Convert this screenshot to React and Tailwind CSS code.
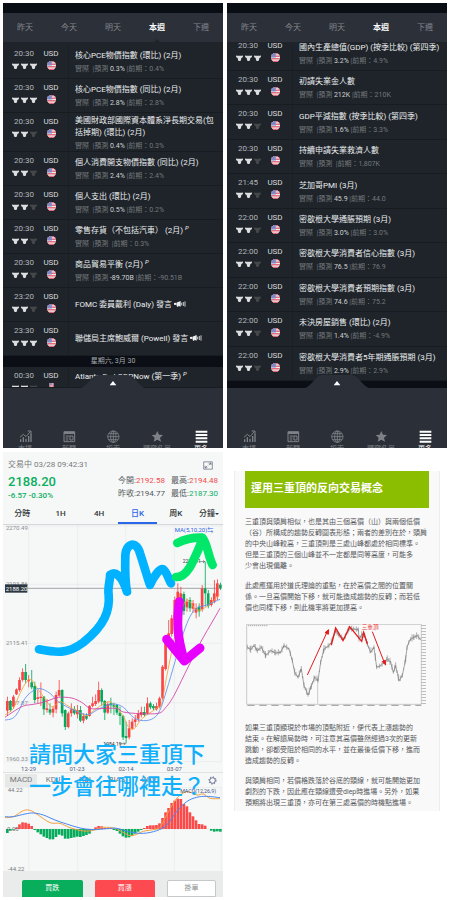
import React from "react";
import clsx from "clsx";

const DAY_TABS = ["昨天", "今天", "明天", "本週", "下週"];

const EVENTS_TOP = [
  { time: "20:30", level: 3, title: "核心PCE物價指數 (環比) (2月)", forecast: "0.3%", previous: "0.4%" },
  { time: "20:30", level: 3, title: "核心PCE物價指數 (同比) (2月)", forecast: "2.8%", previous: "2.8%" },
  { time: "20:30", level: 2, title: "美國財政部國際資本體系淨長期交易(包括掉期) (環比) (2月)", forecast: "0.4%", previous: "0.3%" },
  { time: "20:30", level: 2, title: "個人消費開支物價指數 (同比) (2月)", forecast: "2.4%", previous: "2.4%" },
  { time: "20:30", level: 2, title: "個人支出 (環比) (2月)", forecast: "0.5%", previous: "0.2%" },
  { time: "20:30", level: 2, title: "零售存貨（不包括汽車） (2月)", flag: "p", forecast: "", previous: "0.3%" },
  { time: "20:30", level: 2, title: "商品貿易平衡 (2月)", flag: "p", forecast: "-89.70B", previous: "-90.51B" },
  { time: "23:20", level: 2, title: "FOMC 委員戴利 (Daly) 發言", flag: "speech" },
  { time: "23:30", level: 3, title: "聯儲局主席鮑威爾 (Powell) 發言", flag: "speech" },
];

const NEXT_DAY_EVENT = { time: "00:30", level: 2, title: "Atlanta Fed GDPNow (第一季)", flag: "p" };

const EVENTS_BOTTOM = [
  { time: "20:30", level: 3, title: "國內生產總值(GDP) (按季比較) (第四季)", forecast: "3.2%", previous: "4.9%" },
  { time: "20:30", level: 3, title: "初請失業金人數", forecast: "212K", previous: "210K" },
  { time: "20:30", level: 2, title: "GDP平減指數 (按季比較) (第四季)", forecast: "1.6%", previous: "3.3%" },
  { time: "20:30", level: 2, title: "持續申請失業救濟人數", forecast: "", previous: "1,807K" },
  { time: "21:45", level: 2, title: "芝加哥PMI (3月)", forecast: "45.9", previous: "44.0" },
  { time: "22:00", level: 2, title: "密歇根大學通脹預期 (3月)", forecast: "3.0%", previous: "3.0%" },
  { time: "22:00", level: 2, title: "密歇根大學消費者信心指數 (3月)", forecast: "76.5", previous: "76.9" },
  { time: "22:00", level: 2, title: "密歇根大學消費者預期指數 (3月)", forecast: "74.6", previous: "75.2" },
  { time: "22:00", level: 2, title: "未決房屋銷售 (環比) (2月)", forecast: "1.4%", previous: "-4.9%" },
  { time: "22:00", level: 2, title: "密歇根大學消費者5年期通脹預期 (3月)", forecast: "2.9%", previous: "2.9%" },
];

// [body top, body bottom, high, low, rising]
const CANDLES = [
  [303, 332, 290, 348, 1], [303, 330, 300, 335, 0], [290, 320, 285, 326, 1], [268, 283, 265, 285, 1],
  [240, 270, 232, 275, 1], [216, 240, 205, 245, 1], [216, 240, 192, 250, 0], [239, 244, 225, 262, 1],
  [247, 262, 210, 268, 0], [258, 300, 245, 310, 0], [292, 297, 270, 310, 1], [290, 294, 247, 318, 1],
  [290, 328, 288, 345, 0], [325, 330, 297, 338, 1], [328, 338, 310, 345, 0], [326, 338, 318, 352, 1],
  [285, 328, 275, 340, 1], [270, 287, 240, 290, 1], [270, 340, 268, 350, 0], [330, 381, 328, 390, 0],
  [340, 381, 335, 385, 1], [328, 340, 310, 350, 1], [328, 340, 318, 345, 0], [330, 343, 315, 355, 1],
  [330, 362, 318, 366, 0], [348, 362, 340, 370, 1], [348, 356, 340, 360, 0], [318, 348, 315, 350, 1],
  [310, 318, 290, 322, 1], [303, 312, 283, 318, 1], [270, 305, 245, 310, 1], [270, 305, 265, 318, 0],
  [303, 338, 300, 360, 0], [312, 338, 305, 342, 1], [310, 316, 293, 340, 0], [314, 320, 308, 345, 0],
  [315, 338, 312, 345, 0], [338, 348, 320, 375, 0], [348, 412, 345, 420, 0], [408, 414, 365, 430, 0],
  [385, 412, 360, 418, 1], [365, 386, 355, 390, 1], [358, 366, 345, 380, 1], [342, 356, 330, 365, 1],
  [336, 345, 320, 352, 1], [336, 345, 320, 350, 0], [310, 340, 292, 345, 1], [310, 322, 305, 328, 0],
  [318, 325, 312, 330, 0], [318, 328, 308, 332, 1], [295, 320, 290, 325, 1], [200, 295, 195, 300, 1],
  [120, 207, 115, 212, 1], [100, 130, 60, 135, 1], [55, 102, 45, 110, 1], [0, 60, -10, 70, 1],
  [-25, 10, -50, 20, 1], [-20, 0, -40, 10, 1], [-18, 33, -25, 45, 0], [5, 22, -5, 35, 1],
  [0, 25, -8, 35, 0], [10, 26, 0, 38, 1], [24, 38, 10, 55, 1], [20, 34, 10, 50, 0],
  [-35, 28, -45, 35, 1], [-35, -20, -115, 20, 0], [-20, 18, -30, 25, 0], [0, 15, -8, 20, 1],
  [-20, 5, -60, 10, 1], [-50, -10, -62, 0, 1], [-46, -36, -52, -30, 0],
];

const MACD_BARS = [
  -12, -5, -2, 4, 14, 20, 19, 16, 9, -3, -10, -16, -23, -27, -31, -31, -24, -17, -20, -29, -29, -27, -25, -23,
  -24, -21, -18, -14, -3, 5, 9, 8, 3, 2, 2, -3, -6, -14, -22, -26, -25, -20, -14, -8, -3, 3, 9, 11, 11, 12, 17,
  33, 50, 63, 78, 85, 91, 90, 75, 68, 50, 38, 26, 15, 14, 10, 0, -5, -8, -7, -8,
];

const candleX = (i) => 22 + i * 9.13;

// Catmull-Rom through the points so the averages look smooth
const smooth = (pts) => {
  let d = `M${pts[0][0]} ${pts[0][1]}`;
  for (let i = 0; i < pts.length - 1; i++) {
    const p0 = pts[i - 1] || pts[i];
    const p1 = pts[i];
    const p2 = pts[i + 1];
    const p3 = pts[i + 2] || p2;
    d += `C${p1[0] + (p2[0] - p0[0]) / 6} ${p1[1] + (p2[1] - p0[1]) / 6} ${p2[0] - (p3[0] - p1[0]) / 6} ${p2[1] - (p3[1] - p1[1]) / 6} ${p2[0]} ${p2[1]}`;
  }
  return d;
};

const MA5 = [[15, 345], [40, 325], [60, 280], [80, 245], [95, 240], [110, 262], [130, 290], [155, 320], [180, 305], [200, 315], [235, 335], [260, 347], [290, 325], [325, 305], [345, 318], [370, 350], [385, 380], [403, 386], [420, 362], [440, 345], [470, 325], [485, 310], [500, 230], [520, 130], [535, 60], [560, 0], [590, 30], [620, 20], [658, -15]];
const MA10 = [[15, 360], [38, 355], [55, 335], [75, 295], [100, 272], [122, 266], [150, 280], [175, 305], [210, 325], [250, 342], [270, 342], [300, 325], [340, 312], [370, 322], [400, 352], [430, 362], [460, 355], [480, 330], [500, 270], [525, 185], [550, 100], [570, 50], [590, 25], [620, 15], [660, -2]];
const MA20 = [[15, 352], [40, 335], [70, 318], [100, 313], [125, 308], [150, 300], [175, 292], [215, 294], [245, 307], [270, 325], [300, 326], [350, 325], [370, 336], [420, 341], [475, 340], [495, 325], [520, 290], [560, 210], [600, 130], [640, 60], [660, 25]];
const DIF = [[15, 233], [40, 230], [70, 212], [90, 211], [110, 222], [150, 248], [180, 250], [210, 263], [250, 273], [280, 271], [310, 262], [345, 265], [365, 275], [390, 287], [410, 283], [430, 274], [465, 268], [480, 262], [500, 225], [530, 175], [560, 155], [590, 165], [610, 162], [630, 175], [660, 176]];
const DEA = [[15, 230], [40, 230], [75, 222], [100, 219], [130, 225], [165, 240], [200, 252], [240, 264], [280, 269], [320, 266], [350, 265], [390, 276], [430, 280], [470, 272], [500, 255], [530, 215], [560, 185], [590, 172], [620, 169], [660, 173]];

const SAMPLE = [[70, 115], [80, 122], [90, 110], [100, 125], [112, 115], [125, 140], [140, 125], [155, 132], [170, 130], [180, 110], [195, 120], [205, 155], [212, 190], [222, 205], [232, 180], [240, 230], [252, 258], [262, 232], [272, 205], [282, 215], [290, 160], [300, 120], [315, 110], [322, 100], [335, 65], [345, 80], [360, 90], [375, 60], [385, 60], [403, 62], [405, 90], [415, 75], [422, 80], [430, 105], [440, 130], [450, 115], [458, 175], [470, 170], [480, 160], [490, 150], [500, 160], [508, 190], [515, 170], [525, 215], [535, 200], [545, 150], [550, 110], [560, 90], [570, 85], [580, 80], [590, 92]];

// Walk along the sample line and put a small price bar every few units
const sampleBars = () => {
  const bars = [];
  for (let i = 0; i < SAMPLE.length - 1; i++) {
    const [x1, y1] = SAMPLE[i];
    const [x2, y2] = SAMPLE[i + 1];
    for (let x = x1; x < x2; x += 4) {
      const y = y1 + ((y2 - y1) * (x - x1)) / (x2 - x1);
      const reach = 2 + ((x * 7) % 11);
      bars.push({ x, top: y - reach, bottom: y + reach * 0.8 });
    }
  }
  return bars;
};

const BullIcon = ({ active }) => (
  <svg viewBox="0 0 21 18" className={clsx("w-[7px] h-[6px]", active ? "text-[#dcdedf]" : "text-[#45484b]")} fill="currentColor">
    <path d="M0 0c1 3 3 3 6 2h9c3 1 5 1 6-2 1 5-1 8-5 9l-1 6-2 3H8l-2-3-1-6C1 8-1 5 0 0z" />
  </svg>
);

const UsFlag = () => (
  <svg viewBox="0 0 28 28" className="w-[9px] h-[9px] rounded-full">
    <rect width="28" height="28" fill="#f4eef0" />
    {[0, 8, 16, 24].map((y) => (
      <rect key={y} y={y} width="28" height="4" fill="#e0586a" />
    ))}
    <rect width="15" height="14" fill="#7f88c4" />
  </svg>
);

const EventFlag = ({ flag }) => {
  if (flag === "p") return <i className="text-[6px] leading-none align-top">P</i>;
  if (flag === "speech") {
    return (
      <svg viewBox="0 0 36 18" className="inline-block w-3 h-[6px] align-middle" fill="currentColor">
        <path d="M0 6l6-1v7l-6-1zM7 5L20 0v17L13 14v3H9l-1-4H7z" />
        <path d="M23 5v8M28 3v12M33 1v16" stroke="currentColor" strokeWidth="2.5" />
      </svg>
    );
  }
  return null;
};

const EventRow = ({ event, className }) => (
  <li className={clsx("flex border-b border-[#171c21] pl-[7px] pr-1", className)}>
    <div className="w-7 pt-1 flex flex-col items-center gap-1">
      <time className="text-[8px] leading-[10px] text-[#b4b7ba]">{event.time}</time>
      <div className="flex gap-[2px]">
        {[1, 2, 3].map((n) => (
          <BullIcon key={n} active={n <= event.level} />
        ))}
      </div>
    </div>
    <div className="w-[26px] pt-1 flex flex-col items-center gap-[2px]">
      <span className="text-[8px] leading-[10px] text-[#d8dadc]">USD</span>
      <UsFlag />
    </div>
    <div className="ml-1 flex-1 min-w-0 border-l border-[#1a2025] pl-[6px] flex flex-col justify-center gap-[3px]">
      <h3 className="text-[8px] leading-3 text-[#eceeef]">
        {event.title} <EventFlag flag={event.flag} />
      </h3>
      {event.previous && (
        <p className="text-[7px] leading-2 text-[#74787b] whitespace-pre">
          實際{"  "}|預測 <span className="text-[#d0d2d4]">{event.forecast}</span> |前期：{event.previous}
        </p>
      )}
    </div>
  </li>
);

const NAV_ITEMS = [
  {
    label: "市場",
    icon: (
      <g fill="none" stroke="currentColor" strokeWidth="3">
        <path d="M5 36v-8M13 36V22M21 36V26M29 36V18M36 36V12" strokeWidth="4" />
        <path d="M3 22l10-9 8 7L35 4M26 3h10v10" />
      </g>
    ),
  },
  {
    label: "新聞",
    icon: (
      <g fill="none" stroke="currentColor" strokeWidth="3">
        <path d="M3 5h32v30H3z" />
        <path d="M3 9h32" strokeWidth="6" />
        <path d="M8 18h12M8 24h8M8 30h8M21 18h9v12h-9z" />
      </g>
    ),
  },
  {
    label: "探索",
    icon: (
      <g fill="none" stroke="currentColor" strokeWidth="2.5">
        <circle cx="19" cy="20" r="17" />
        <ellipse cx="19" cy="20" rx="8" ry="17" />
        <path d="M2 20h34M19 3v34M5 11h28M5 29h28" />
      </g>
    ),
  },
  {
    label: "觀察名單",
    icon: <path d="M19 3l5 11 12 1-9 8 3 12-11-6-11 6 3-12-9-8 12-1z" fill="currentColor" />,
  },
  {
    label: "更多",
    active: true,
    icon: <path d="M2 5h35M2 15h35M2 25h35M2 35h35" stroke="currentColor" strokeWidth="6" />,
  },
];

const BottomNav = () => (
  <nav className="relative h-[60px] shrink-0 bg-[#2b3038] flex items-end">
    <button aria-label="展開" className="absolute bottom-full left-1/2 -translate-x-1/2 w-16 h-[13px]">
      <svg viewBox="0 0 192 39" className="w-full h-full">
        <path d="M0 39C14 36 24 18 36 7 42 2 46 0 54 0h84c8 0 12 2 18 7 12 11 22 29 36 32z" fill="#2b3038" />
        <path d="M86 31l10-13 10 13z" fill="#fff" />
      </svg>
    </button>
    {NAV_ITEMS.map((item) => (
      <a
        key={item.label}
        href="#"
        className={clsx(
          "flex-1 h-[18px] overflow-hidden flex flex-col items-center gap-px",
          item.active ? "text-white" : "text-[#7e8288]"
        )}
      >
        <svg viewBox="0 0 39 39" className="w-[13px] h-[13px] shrink-0">{item.icon}</svg>
        <span className="text-[7px] leading-[10px] whitespace-nowrap">{item.label}</span>
      </a>
    ))}
  </nav>
);

const CalendarPanel = ({ children }) => (
  <section className="flex flex-col bg-[#1e242a] overflow-hidden">
    <div className="h-[10px] shrink-0 bg-[#090d14]" />
    <div className="h-[29px] shrink-0 bg-[#2c3038] flex">
      {DAY_TABS.map((tab) => (
        <button
          key={tab}
          className={clsx(
            "relative flex-1 text-[8px]",
            tab === "本週" ? "text-white font-bold" : "text-[#84888d]"
          )}
        >
          {tab}
          {tab === "本週" && (
            <svg viewBox="0 0 6 3" className="absolute bottom-0 left-1/2 -translate-x-1/2 w-[6px] h-[3px]">
              <path d="M0 3l3-3 3 3z" fill="#1e242a" />
            </svg>
          )}
        </button>
      ))}
    </div>
    {children}
    <BottomNav />
  </section>
);

const PriceChart = () => (
  <svg viewBox="9 0 660 741" className="block w-full" role="img" aria-label="日K">
    <g stroke="#e6e9ea" strokeWidth="2">
      <path d="M15 3H665M15 355H665M15 533H665M15 710H665M15 178H665" />
      <path d="M86 0V710M233 0V710M377 0V710M523 0V710M664 0V710" />
    </g>
    <g fontSize="18" fill="#8a8d90">
      <text x="18" y="16">2270.49</text>
      <text x="18" y="183">2193.86</text>
      <text x="18" y="361">2115.41</text>
      <text x="18" y="539">2037.87</text>
      <text x="18" y="709">1960.33</text>
    </g>
    <g fontSize="18" fill="#55587c" textAnchor="middle">
      <text x="86" y="737">12-29</text>
      <text x="231" y="737">01-23</text>
      <text x="378" y="737">02-14</text>
      <text x="523" y="737">03-07</text>
    </g>
    <path d="M15 190H665" stroke="#777c80" strokeWidth="2" />
    {CANDLES.map(([top, bottom, high, low, rising], i) => (
      <g key={i} fill={rising ? "#fb4545" : "#06a95a"}>
        <rect x={candleX(i) - 1} y={high + 225} width="2.5" height={low - high} />
        <rect x={candleX(i) - 4} y={top + 225} width="8" height={bottom - top} />
      </g>
    ))}
    <g transform="translate(0 225)" fill="none" strokeWidth="2.5">
      <path d={smooth(MA5)} stroke="#f2a13c" />
      <path d={smooth(MA10)} stroke="#5b8def" />
      <path d={smooth(MA20)} stroke="#d4389f" />
    </g>
    <g fontSize="15" fill="#333">
      <text x="310" y="662">1984.19</text>
      <path d="M358 656h18M371 652l5 4-5 4" stroke="#333" strokeWidth="1.5" fill="none" />
      <text x="548" y="115">2222.91</text>
      <path d="M596 110h18M609 106l5 4-5 4" stroke="#333" strokeWidth="1.5" fill="none" />
    </g>
    <text x="524" y="21" fontSize="18" fill="#2c62e6">MA(5,10,20)⇆</text>
    <rect x="15" y="178" width="67" height="25" fill="#2d3742" />
    <text x="17" y="197" fontSize="18" fill="#fff">2188.20</text>
    {/* hand drawn marks */}
    <g fill="none" strokeLinecap="round" strokeLinejoin="round" strokeWidth="26">
      <path d="M117 373C165 382 200 390 250 352C315 300 330 255 326 210C322 190 331 165 330 150C345 138 365 150 381 200C374 165 375 130 376 90C378 55 410 45 420 85C430 115 440 150 450 180C460 155 480 128 490 133C503 145 506 165 513 175" stroke="#00b2ff" />
      <path d="M528 156C560 158 577 118 607 45M532 54C555 42 580 37 607 38C622 55 625 95 638 120" stroke="#00e76a" />
      <path d="M538 230C530 290 530 330 553 408M500 343L553 408M600 369L553 408" stroke="#e800ff" strokeWidth="27" />
    </g>
  </svg>
);

const MacdChart = () => (
  <svg viewBox="9 141 660 252" className="block w-full" role="img" aria-label="MACD">
    <g stroke="#e6e9ea" strokeWidth="2">
      <path d="M86 141V393M233 141V393M377 141V393M523 141V393M664 141V393M15 267H665M15 142H665" />
    </g>
    {MACD_BARS.map((v, i) => (
      <rect
        key={i}
        x={candleX(i) - 4}
        y={v > 0 ? 267 - v : 267}
        width="8"
        height={Math.abs(v)}
        fill={v > 0 ? "#fb4a4a" : "#08ab5c"}
      />
    ))}
    <g fontSize="18" fill="#77797c">
      <text x="23" y="156">44.22</text>
      <text x="21" y="273">0.00</text>
      <text x="23" y="392">-44.22</text>
    </g>
    <g fill="none" strokeWidth="3">
      <path d={smooth(DIF)} stroke="#f2a13c" />
      <path d={smooth(DEA)} stroke="#4a86f0" />
    </g>
    <text x="648" y="158" fontSize="16" fill="#44507c" textAnchor="end">MACD(12,26,9)</text>
  </svg>
);

const Quote = ({ label, value, className }) => (
  <div className="flex">
    <dt>{label}:</dt>
    <dd className={className}>{value}</dd>
  </div>
);

const PERIODS = ["分時", "1H", "4H", "日K", "周K"];
const INDICATORS = ["MACD", "KDJ", "RSI", "BIAS", "OBV"];

const TradingPanel = () => (
  <section className="relative flex flex-col bg-[#f6f8f8] overflow-hidden text-[8px] text-[#55585b]">
    <header className="px-[5px] pt-2">
      <div className="flex justify-between items-center pr-[5px] leading-[10px] text-[#77797c]">
        <span>交易中 03/28 09:42:31</span>
        <button aria-label="全螢幕">
          <svg viewBox="0 0 30 26" className="w-[10px] h-[9px]" fill="none" stroke="#5c5f75" strokeWidth="2">
            <path d="M2 2h26v22H2zM17 6h7v6M24 6l-7 6M6 14v6h7M6 20l7-6" />
          </svg>
        </button>
      </div>
      <div className="flex justify-between items-center h-[35px]">
        <div className="text-[#0bae5e] font-medium">
          <p className="text-[13px] leading-4">2188.20</p>
          <p className="leading-3">-6.57 -0.30%</p>
        </div>
        <dl className="grid grid-cols-2 gap-x-[6px] gap-y-[3px] leading-[10px]">
          <Quote label="今開" value="2192.58" className="text-[#f44a4a]" />
          <Quote label="最高" value="2194.48" className="text-[#f44a4a]" />
          <Quote label="昨收" value="2194.77" />
          <Quote label="最低" value="2187.30" className="text-[#0bae5e]" />
        </dl>
      </div>
    </header>
    <div className="flex h-5 border-b border-[#d4d8da] text-[#333639] font-medium">
      {PERIODS.map((p) => (
        <button
          key={p}
          className={clsx("flex-1 border-b-2", p === "日K" ? "text-[#2a66e8] border-[#2a66e8]" : "border-transparent")}
        >
          {p}
        </button>
      ))}
      <button className="w-7 border-b-2 border-transparent flex items-center justify-center whitespace-nowrap">
        分鐘
        <svg viewBox="0 0 12 6" className="w-1 h-[2px]"><path d="M0 0h12L6 6z" fill="#333639" /></svg>
      </button>
    </div>
    <PriceChart />
    <div className="h-[15px] flex items-center border-t border-[#e0e3e4] px-[2px] text-[#77797c]">
      {INDICATORS.map((name) => (
        <button
          key={name}
          className={clsx("w-8 h-[13px]", name === "MACD" && "bg-[#e7e9e9]")}
        >
          {name}
        </button>
      ))}
      <button aria-label="設定" className="ml-auto mr-1">
        <svg viewBox="0 0 27 27" className="block w-[9px] h-[9px]" fill="none" stroke="#4b5080">
          <circle cx="13.5" cy="13.5" r="8.5" strokeWidth="2.5" />
          <circle cx="13.5" cy="13.5" r="11" strokeWidth="3" strokeDasharray="3 5.64" />
        </svg>
      </button>
    </div>
    <MacdChart />
    <footer className="flex-1 min-h-[26px] bg-[#eaecec] pt-[9px] pl-[19px] pr-[7px] flex gap-3 text-[7px]">
      <button className="flex-1 rounded-t-xs bg-[#08ae5c] text-white">買跌</button>
      <button className="flex-1 rounded-t-xs bg-[#fd4a50] text-white">買漲</button>
      <button className="w-[49px] rounded-t-xs bg-white border border-[#c5c8ca] text-[#8b8e91]">掛單</button>
    </footer>
    <p className="absolute inset-x-0 bottom-[94px] pl-[26px] text-[22px] leading-8 font-medium text-[#12b0fb] whitespace-nowrap">
      請問大家三重頂下
      <br />
      一步會往哪裡走？
    </p>
  </section>
);

const SampleChart = () => (
  <svg viewBox="63 45 552 248" className="block w-full mt-[10px] mb-4" role="img" aria-label="三重頂">
    <path d="M68 46H592V286H68z" fill="#fafafa" stroke="#999" strokeWidth="1.5" />
    <path d="M72 50h60" stroke="#888" strokeWidth="2" strokeDasharray="4 2" />
    <path d="M599 48V284" stroke="#aaa" strokeWidth="14" strokeDasharray="2 7" />
    <path d="M70 289H592" stroke="#aaa" strokeWidth="4" strokeDasharray="22 14" />
    <path d="M281 200V284" stroke="#999" strokeWidth="1.5" />
    <g stroke="#666" strokeWidth="1.5">
      {sampleBars().map((b, i) => (
        <line key={i} x1={b.x} x2={b.x} y1={b.top} y2={b.bottom} />
      ))}
    </g>
    <polyline points={SAMPLE.map((p) => p.join(",")).join(" ")} fill="none" stroke="#777" strokeWidth="2" />
    <path d="M322 108L335 57 357 95 377 53 413 97 419 70 430 105" fill="none" stroke="#e51a1a" strokeWidth="4" />
    <g stroke="#e51a1a" strokeWidth="3" fill="#e51a1a">
      <path d="M250 198L308 72M445 68L480 158" />
      <path d="M314 62l-1 14-10-5zM485 168l-10-10 9-4z" />
    </g>
    <rect x="410" y="46" width="54" height="18" fill="#fafafa" />
    <text x="413" y="61" fontSize="17" fill="#e53030">三重頂</text>
  </svg>
);

const PARAGRAPHS_BEFORE = [
  [
    "三重頂與頭肩相似，也是其由三個高價（山）與兩個低價",
    "（谷）所構成的趨勢反轉圖表形態；兩者的差別在於，頭肩",
    "的中央山峰較高，三重頂則是三處山峰都處於相同標準。",
    "但是三重頂的三個山峰並不一定都是同等高度，可能多",
    "少會出現偏離。",
  ],
  [
    "此處應運用於道氏理論的重點，在於高價之間的位置關",
    "係。一旦高價開始下移，就可能造成趨勢的反轉；而若低",
    "價也同樣下移，則此機率將更加提高。",
  ],
];

const PARAGRAPHS_AFTER = [
  [
    "如果三重頂顯現於市場的頂點附近，便代表上漲趨勢的",
    "結束。在解讀局勢時，可注意其高價雖然經過3次的更新",
    "跳動，卻都受阻於相同的水平，並在最後低價下移，進而",
    "造成趨勢的反轉。",
  ],
  [
    "與頭肩相同，若價格跌落於谷底的頸線，就可能開始更加",
    "劇烈的下跌，因此應在頸線遭受diep時進場。另外，如果",
    "預期將出現三重頂，亦可在第三處高價的時機點進場。",
  ],
];

const Paragraph = ({ lines }) => (
  <p className="mt-[9px] text-[7px] leading-[11px] text-[#55575a] whitespace-nowrap">
    {lines.map((line) => (
      <span key={line} className="block">{line}</span>
    ))}
  </p>
);

const ArticlePanel = () => (
  <section className="px-[7px] pt-[19px]">
    <article className="bg-[#f9f9f9] border-x border-[#ededed] px-[10px] pb-[2px]">
      <h2 className="h-[37px] bg-[#8bbd00] px-[6px] flex items-center text-[11px] font-bold text-white whitespace-nowrap">
        運用三重頂的反向交易概念
      </h2>
      {PARAGRAPHS_BEFORE.map((lines) => (
        <Paragraph key={lines[0]} lines={lines} />
      ))}
      <SampleChart />
      {PARAGRAPHS_AFTER.map((lines) => (
        <Paragraph key={lines[0]} lines={lines} />
      ))}
    </article>
  </section>
);

const App = () => (
  <main
    lang="zh-Hant"
    className="min-h-screen bg-white p-[3px] grid grid-cols-2 auto-rows-fr gap-1 font-[Roboto,'Noto_Sans_CJK_TC',sans-serif]"
  >
    <CalendarPanel>
      <ul className="flex-1 flex flex-col pt-[3px]">
        {EVENTS_TOP.map((event) => (
          <EventRow key={event.title} event={event} className="min-h-[34px] grow" />
        ))}
        <li className="h-[11px] bg-[#0b0f15] text-center text-[7px] leading-[11px] text-[#a6a9ac]">星期六, 3月 30</li>
        <EventRow event={NEXT_DAY_EVENT} className="h-[21px] overflow-hidden" />
      </ul>
    </CalendarPanel>

    <CalendarPanel>
      <ul className="flex-1 flex flex-col pb-[7px] bg-[#0b0f15]">
        {EVENTS_BOTTOM.map((event, i) =>
          i === 0 ? (
            <li key={event.title} className="h-[29px] overflow-hidden flex flex-col justify-end bg-[#1e242a]">
              <ul>
                <EventRow event={event} className="h-[34px]" />
              </ul>
            </li>
          ) : (
            <EventRow key={event.title} event={event} className="min-h-[34px] grow bg-[#1e242a]" />
          )
        )}
      </ul>
    </CalendarPanel>

    <TradingPanel />
    <ArticlePanel />
  </main>
);

export default App;
